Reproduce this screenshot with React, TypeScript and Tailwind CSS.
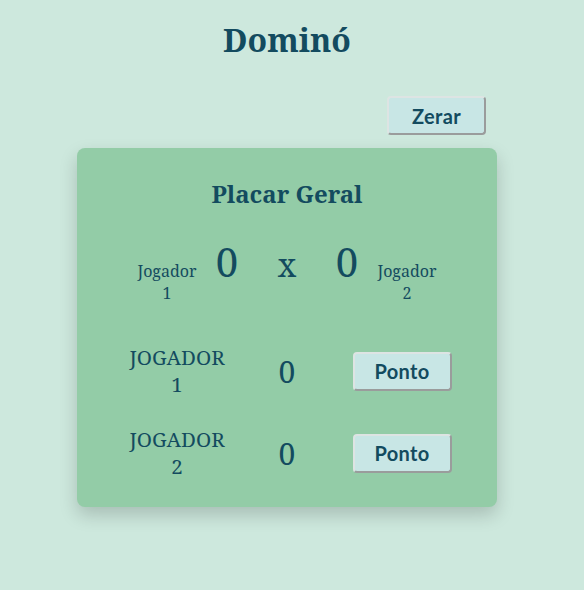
export default function App() {
  const serif = "font-['Noto_Serif','DejaVu_Serif',serif]";
  const btn =
    "font-['Lato',sans-serif] font-bold text-[20px] tracking-[0.3px] text-[#134b5f] bg-[#c8e6e5] rounded-[4px] border-2 border-t-[#dde4e3] border-l-[#dde4e3] border-r-[#9a9c9c] border-b-[#9a9c9c] w-[99px] h-[39px]";

  return (
    <div className="min-h-[590px] bg-[#cde8dd] text-[#134b5f]">
      <div className="w-[574px] flex flex-col items-center">
        <h1 className={`${serif} font-bold text-[32px] leading-[48px] mt-[16px]`}>Dominó</h1>

        <div className="w-[420px] flex justify-end pr-[11px] mt-[32px]">
          <button className={btn}>Zerar</button>
        </div>

        <div
          className={`${serif} mt-[13px] w-[420px] h-[359px] bg-[#93cca7] rounded-[8px] shadow-[0_8px_18px_rgba(0,0,0,0.18)] flex flex-col items-center pt-[28px]`}
        >
          <h2 className="font-bold text-[24px] leading-[36px]">Placar Geral</h2>

          <div className="grid grid-cols-5 w-[300px] items-baseline text-center mt-[23px]">
            <div className="text-[16px] leading-[22px]">Jogador 1</div>
            <div className="text-[40px] leading-[54px]">0</div>
            <div className="text-[32px] leading-[54px]">x</div>
            <div className="text-[40px] leading-[54px]">0</div>
            <div className="text-[16px] leading-[22px]">Jogador 2</div>
          </div>

          <div className="mt-[40px] flex flex-col gap-[28px] self-start ml-[45px]">
            {["JOGADOR 1", "JOGADOR 2"].map((name) => (
              <div key={name} className="grid grid-cols-[110px_110px_120px] items-center text-center">
                <div className="text-[20.5px] leading-[27px]">{name}</div>
                <div className="text-[30px]">0</div>
                <div className="flex justify-center">
                  <button className={btn}>Ponto</button>
                </div>
              </div>
            ))}
          </div>
        </div>
      </div>
    </div>
  );
}
